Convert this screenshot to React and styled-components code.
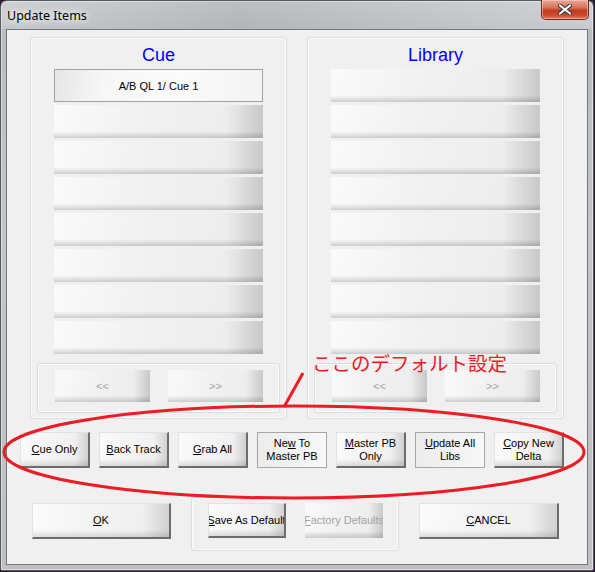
import React from 'react'
import styled, { createGlobalStyle, css } from 'styled-components'

const GlobalStyle = createGlobalStyle`
	html, body {
		margin: 0;
		padding: 0;
		background: #2a1a30;
		overflow: hidden;
	}
	body {
		font-family: 'Liberation Sans', Arial, sans-serif;
	}
`

const Window = styled.div`
	position: relative;
	box-sizing: border-box;
	width: 594px;
	height: 571px;
	display: flex;
	flex-direction: column;
	padding: 0 5px 5px;
	border: 1px solid #555a60;
	border-radius: 7px 7px 2px 2px;
	background: linear-gradient(180deg, #c6c8cb 0%, #b9bcbf 6%, #c3c5c7 40%, #bdbfc1 100%);
	box-shadow: inset 0 0 0 1px rgba(255, 255, 255, 0.45);
`

const TitleBar = styled.div`
	height: 28px;
	display: flex;
	align-items: flex-start;
	justify-content: space-between;
	background: linear-gradient(90deg, rgba(255, 255, 255, 0.15), rgba(120, 120, 120, 0.12) 40%, rgba(255, 255, 255, 0.2));
	margin: 0 -5px;
	padding: 0 4px 0 6px;
`

const Title = styled.span`
	font-family: 'Noto Sans', 'Open Sans', sans-serif;
	font-size: 12.5px;
	line-height: 14px;
	margin-top: 8px;
	color: #000;
	text-shadow: 0 0 6px #fff, 0 0 10px #fff;
`

const CloseButton = styled.div`
	box-sizing: border-box;
	width: 48px;
	height: 20px;
	margin-top: -1px;
	border: 1px solid #6e2b20;
	border-top: none;
	border-radius: 0 0 5px 5px;
	background: linear-gradient(180deg, #e9a796 0%, #d9745c 40%, #c23a20 55%, #cc4a2c 80%, #e07a5c 100%);
	box-shadow: inset 0 0 0 1px rgba(255, 220, 210, 0.5);
	display: flex;
	align-items: center;
	justify-content: center;
`

const Client = styled.div`
	flex: 1;
	position: relative;
	border: 1px solid #72777d;
	background: #f0f0f0;
	display: flex;
	flex-direction: column;
`

const PanelRow = styled.div`
	display: flex;
	gap: 20px;
	padding: 7px 23px 0;
`

const GroupBox = styled.div`
	box-sizing: border-box;
	border: 1px solid #d5dfe5;
	border-radius: 3px;
	box-shadow: inset 0 0 0 1px #fbfbfb;
	display: flex;
	flex-direction: column;
	align-items: center;
`

const Panel = styled(GroupBox)`
	width: 257px;
	height: 382px;
`

const Heading = styled.div`
	font-size: 18px;
	line-height: 20px;
	color: #0000ff;
	margin: 7px 0 4px;
`

const ItemList = styled.div`
	width: 209px;
	display: flex;
	flex-direction: column;
	gap: 3px;
`

const glossy = css`
	background:
		linear-gradient(90deg, rgba(0, 0, 0, 0) 82%, rgba(0, 0, 0, 0.15) 100%),
		linear-gradient(180deg, rgba(0, 0, 0, 0) 80%, rgba(0, 0, 0, 0.17) 100%),
		linear-gradient(100deg, #fafafa 0%, #f1f1f1 45%, #ebebeb 100%);
`

const Item = styled.div`
	box-sizing: border-box;
	height: 33px;
	display: flex;
	align-items: center;
	justify-content: center;
	font-size: 11px;
	color: #000;
	${glossy}
	${(p) =>
		p.$selected &&
		css`
			border: 1px solid #a0a0a0;
			background: linear-gradient(100deg, #e6e6e6 0%, #f7f7f7 25%, #fbfbfb 60%, #f3f3f3 100%);
		`}
`

const InnerBox = styled(GroupBox)`
	width: 243px;
	height: 50px;
	margin-top: 9px;
	flex-direction: row;
	align-items: flex-start;
	gap: 18px;
	padding: 6px 0 0 17px;
`

const Button = styled.div`
	box-sizing: border-box;
	width: ${(p) => p.$w || 70}px;
	height: ${(p) => p.$h || 36}px;
	display: flex;
	align-items: center;
	justify-content: center;
	text-align: center;
	font-size: 11px;
	line-height: 13px;
	white-space: nowrap;
	overflow: hidden;
	color: ${(p) => (p.$disabled ? '#a3a3a3' : '#000')};
	flex-shrink: 0;
	${(p) =>
		p.$flat
			? css`
					border: 1px solid #a6a6a6;
					background: linear-gradient(90deg, #ececec 0%, #f3f3f3 60%, #f8f8f8 100%);
			  `
			: p.$disabled
			? css`
					${glossy}
			  `
			: css`
					border-style: solid;
					border-width: 1px 2px 2px 1px;
					border-color: #e2e2e2 #6c6c6c #6c6c6c #e2e2e2;
					background:
						linear-gradient(90deg, rgba(0, 0, 0, 0) 80%, rgba(0, 0, 0, 0.12) 100%),
						linear-gradient(180deg, rgba(0, 0, 0, 0) 78%, rgba(0, 0, 0, 0.12) 100%),
						linear-gradient(100deg, #fbfbfb 0%, #f3f3f3 50%, #ededed 100%);
			  `}
	${(p) =>
		p.$lifted &&
		css`
			margin-top: 6px;
		`}
	u {
		text-decoration: underline;
		text-underline-offset: 1px;
	}
`

const ActionRow = styled.div`
	display: flex;
	gap: 9px;
	padding-left: 13px;
	margin-top: 13px;
`

const BottomRow = styled.div`
	display: flex;
	align-items: flex-start;
	padding-left: 25px;
	margin-top: 29px;
`

const DefaultsBox = styled(GroupBox)`
	width: 208px;
	height: 54px;
	margin: 0 20px;
	flex-direction: row;
	align-items: flex-start;
	gap: 19px;
	padding: 5px 0 0 16px;
`

const Overlay = styled.svg`
	position: absolute;
	left: -1px;
	top: -1px;
	pointer-events: none;
`

const Note = styled.div`
	position: absolute;
	left: 311px;
	top: 351px;
	font-family: 'Noto Sans CJK JP', sans-serif;
	font-size: 19.5px;
	line-height: 22px;
	color: #ee1c25;
	white-space: nowrap;
	pointer-events: none;
`

function ListColumn({ title, first }) {
	const rows = Array.from({ length: 8 }, (_, i) => i)
	return (
		<Panel>
			<Heading>{title}</Heading>
			<ItemList>
				{rows.map((i) =>
					i === 0 && first ? (
						<Item key={i} $selected>
							{first}
						</Item>
					) : (
						<Item key={i} />
					)
				)}
			</ItemList>
			<InnerBox>
				<Button $w={95} $h={32} $disabled>
					&lt;&lt;
				</Button>
				<Button $w={95} $h={32} $disabled>
					&gt;&gt;
				</Button>
			</InnerBox>
		</Panel>
	)
}

export default function App() {
	return (
		<>
			<GlobalStyle />
			<Window>
				<TitleBar>
					<Title>Update Items</Title>
					<CloseButton>
						<svg width="14" height="11" viewBox="0 0 14 11">
							<path d="M2 1.5 L12 9.5 M12 1.5 L2 9.5" stroke="#3b3b3b" strokeWidth="4.2" strokeLinecap="round" />
							<path d="M2 1.5 L12 9.5 M12 1.5 L2 9.5" stroke="#fff" strokeWidth="2.2" strokeLinecap="round" />
						</svg>
					</CloseButton>
				</TitleBar>
				<Client>
					<PanelRow>
						<ListColumn title="Cue" first="A/B QL 1/ Cue 1" />
						<ListColumn title="Library" />
					</PanelRow>
					<ActionRow>
						<Button>
							<span>
								<u>C</u>ue Only
							</span>
						</Button>
						<Button>
							<span>
								<u>B</u>ack Track
							</span>
						</Button>
						<Button>
							<span>
								<u>G</u>rab All
							</span>
						</Button>
						<Button $flat>
							<span>
								Ne<u>w</u> To
								<br />
								Master PB
							</span>
						</Button>
						<Button>
							<span>
								<u>M</u>aster PB
								<br />
								Only
							</span>
						</Button>
						<Button $flat>
							<span>
								<u>U</u>pdate All
								<br />
								Libs
							</span>
						</Button>
						<Button>
							<span>
								<u>C</u>opy New
								<br />
								Delta
							</span>
						</Button>
					</ActionRow>
					<BottomRow>
						<Button $w={139} $lifted>
							<span>
								<u>O</u>K
							</span>
						</Button>
						<DefaultsBox>
							<Button $w={78} $h={35}>
								<span>
									<u>S</u>ave As Default
								</span>
							</Button>
							<Button $w={78} $h={35} $disabled>
								<span>
									<u>F</u>actory Defaults
								</span>
							</Button>
						</DefaultsBox>
						<Button $w={140} $lifted>
							<span>
								<u>C</u>ANCEL
							</span>
						</Button>
					</BottomRow>
				</Client>
				<Overlay width="594" height="571" viewBox="0 0 594 571">
					<ellipse cx="294" cy="452" rx="290" ry="46" fill="none" stroke="#ed1c24" strokeWidth="3" />
					<line x1="284" y1="407" x2="303" y2="373" stroke="#ed1c24" strokeWidth="3" />
				</Overlay>
				<Note>ここのデフォルト設定</Note>
			</Window>
		</>
	)
}
